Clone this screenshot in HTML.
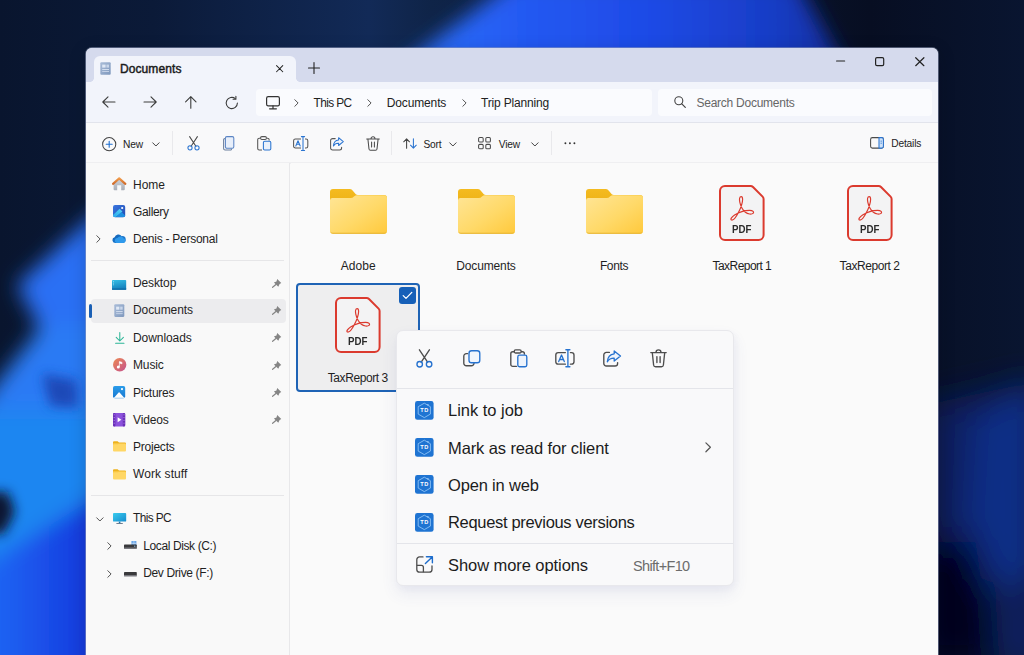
<!DOCTYPE html>
<html lang="en">
<head>
<meta charset="utf-8">
<title>Documents - File Explorer</title>
<style>
*{box-sizing:border-box;margin:0;padding:0}
html,body{width:1024px;height:655px;overflow:hidden}
body{position:relative;background:#0a1733;font-family:"Liberation Sans",sans-serif;color:#1f1f1f;font-size:12px}
svg{position:absolute;overflow:visible;display:block}
.t{position:absolute;white-space:nowrap}
/* wallpaper */
#wall{position:absolute;left:0;top:0;width:1024px;height:655px;overflow:hidden;background:linear-gradient(100deg,#0b1c3c 0%,#0a1936 35%,#081530 70%,#070f24 100%)}
#wall div{position:absolute;border-radius:50%}
/* window */
#win{position:absolute;left:86px;top:48px;width:852px;height:640px;border-radius:6px 6px 0 0;background:#fafafa;overflow:hidden;box-shadow:0 0 0 1px rgba(150,160,190,.5),0 4px 18px rgba(0,0,20,.18)}
#title{position:absolute;left:0;top:0;width:852px;height:34px;background:#d5daed}
#tab{position:absolute;left:8.3px;top:7.5px;width:201.7px;height:26.5px;background:#f2f4fb;border-radius:6px 6px 0 0}
#tab:before,#tab:after{content:"";position:absolute;bottom:0;width:4px;height:4px}
#tab:before{left:-4px;background:radial-gradient(circle at 0 0,rgba(242,244,251,0) 3.6px,#f2f4fb 4.1px)}
#tab:after{right:-4px;background:radial-gradient(circle at 100% 0,rgba(242,244,251,0) 3.6px,#f2f4fb 4.1px)}
#nav{position:absolute;left:0;top:34px;width:852px;height:41px;background:#f2f4fb;border-bottom:1px solid #e2e4ec}
#addr{position:absolute;left:170px;top:40.5px;width:396px;height:27px;background:#fafbfe;border-radius:4px}
#search{position:absolute;left:572px;top:40.5px;width:274px;height:27px;background:#fafbfe;border-radius:4px}
#tool{position:absolute;left:0;top:75px;width:852px;height:41px;background:#f9f9fa;border-bottom:2px solid #efeff1}
.vsep{position:absolute;width:1px;background:#e9e9ec}
#side{position:absolute;left:0;top:115px;width:204px;height:540px;background:#f9f9f9;border-right:1px solid #e8e8ea}
.hsep{position:absolute;left:5px;width:193px;height:1px;background:#e6e6e8}
#selrow{position:absolute;left:5px;top:251px;width:195px;height:24px;background:#ececee;border-radius:4px}
#selbar{position:absolute;left:3px;top:256px;width:2.5px;height:13.5px;background:#1a5fb4;border-radius:2px}
#main{position:absolute;left:205px;top:115px;width:647px;height:540px;background:#fafafa}
#seltile{position:absolute;left:210px;top:235px;width:124px;height:109px;background:#eeeeef;border:2px solid #1e63b5;border-radius:4px}
#check{position:absolute;left:313px;top:238.5px;width:17px;height:17px;background:#1660b8;border-radius:3px}
/* context menu */
#menu{position:absolute;left:396px;top:329.5px;width:338px;height:256.5px;background:#f9f9fa;border:1px solid #e8e8ec;border-radius:7px;box-shadow:0 8px 16px rgba(70,80,150,.09),2px 3px 6px rgba(70,80,150,.04)}
.msep{position:absolute;left:0;width:336px;height:1px;background:#e4e5ea}
</style>
</head>
<body>
<div id="wall">
<svg width="1024" height="655" viewBox="0 0 1024 655" style="left:0;top:0">
  <defs>
    <linearGradient id="wbase" x1="0" y1="0" x2="1" y2="0"><stop offset="0" stop-color="#09152e"/><stop offset="0.15" stop-color="#0b1a38"/><stop offset="0.36" stop-color="#122a57"/><stop offset="0.42" stop-color="#0f2448"/><stop offset="0.85" stop-color="#070e22"/><stop offset="1" stop-color="#091530"/></linearGradient>
    <linearGradient id="wtop" gradientUnits="userSpaceOnUse" x1="420" y1="0" x2="840" y2="0"><stop offset="0" stop-color="#2b6ef8"/><stop offset="0.25" stop-color="#2459f2"/><stop offset="0.55" stop-color="#1e4ae6"/><stop offset="0.85" stop-color="#183cc4"/><stop offset="1" stop-color="#132e9c"/></linearGradient>
    <linearGradient id="wbot" gradientUnits="userSpaceOnUse" x1="0" y1="0" x2="90" y2="0"><stop offset="0" stop-color="#1f63f3"/><stop offset="0.5" stop-color="#1a4ee8"/><stop offset="1" stop-color="#1439dc"/></linearGradient>
    <filter id="b6" x="-30%" y="-30%" width="160%" height="160%"><feGaussianBlur stdDeviation="6"/></filter>
    <filter id="b10" x="-30%" y="-30%" width="160%" height="160%"><feGaussianBlur stdDeviation="10"/></filter>
    <filter id="b16" x="-40%" y="-40%" width="180%" height="180%"><feGaussianBlur stdDeviation="16"/></filter>
  </defs>
  <rect width="1024" height="655" fill="url(#wbase)"/>
  <!-- top bloom -->
  <path d="M395 70 L515 -20 H796 L846 70 Z" fill="url(#wtop)" filter="url(#b10)"/>
  <!-- left petals -->
  <g filter="url(#b10)">
    <path d="M17 285 L110 200 V350 H51 Z" fill="#2a70f4"/>
    <path d="M43 324 H110 V430 H-30 V418 Z" fill="#2a7af4"/>
    <path d="M-30 410 H110 V492 L-30 578 Z" fill="#1f86f1"/>
    <path d="M-30 574 L110 488 V700 H-30 Z" fill="url(#wbot)"/>
  </g>
  <g filter="url(#b6)">
    
    <path d="M42 374 L76 380 L78 408 L50 406 Z" fill="#1c48b8"/>
    <path d="M-20 492 H8 L15 512 L4 534 H-20 Z" fill="#071230"/>
  </g>
  <!-- right glow -->
  <g filter="url(#b16)">
    <path d="M925 405 L1040 380 V600 L930 560 Z" fill="#081f5c"/><path d="M972 420 L1040 380 V570 L1000 600 L966 520 Z" fill="#0b2e86"/>
    <path d="M925 545 L975 540 L992 660 H925 Z" fill="#02051a"/>
    <path d="M995 600 H1040 V670 H1000 Z" fill="#0a2464"/>
  </g>
</svg>
</div>
<div id="win">
  <div id="title"></div>
  <div id="tab"></div>
  <div id="nav"></div>
  <div id="addr"></div>
  <div id="search"></div>
  <div id="tool">
    <div class="vsep" style="left:86px;top:8px;height:24px"></div>
    <div class="vsep" style="left:304.5px;top:8px;height:24px"></div>
    <div class="vsep" style="left:465px;top:8px;height:24px"></div>
  </div>
  <div id="side">
    <div class="hsep" style="top:97px"></div>
    <div class="hsep" style="top:332px"></div>
  </div>
  <div id="selrow"></div><div id="selbar"></div>
  <div id="main"></div>
  <div id="seltile"></div>
  <div id="check"><svg style="left:3px;top:4px" width="11" height="9" viewBox="0 0 11 9"><path d="M1.2 4.6 L4 7.4 L9.8 1.4" fill="none" stroke="#fff" stroke-width="1.3" stroke-linecap="round" stroke-linejoin="round"/></svg></div>
  <div id="ui" style="position:absolute;left:-86px;top:-48px;width:1024px;height:655px">
    <!-- title bar -->
    <svg style="left:100px;top:62px" width="11" height="13" viewBox="0 0 11 13"><defs><linearGradient id="gdoc" x1="0" y1="0" x2="1" y2="1"><stop offset="0" stop-color="#a9bcd8"/><stop offset="1" stop-color="#7f98bd"/></linearGradient></defs><rect x="0.3" y="0.3" width="10.4" height="12.4" rx="1" fill="url(#gdoc)"/><rect x="2.2" y="2.6" width="3.4" height="3" fill="#dfe8f5"/><rect x="6.4" y="2.6" width="2.6" height="3" fill="#c9d6ea"/><rect x="2.2" y="7" width="6.8" height="1" fill="#d3deef"/><rect x="2.2" y="9" width="6.8" height="1" fill="#c3d0e6"/></svg>
    <span class="t" style="left:120px;top:60.5px;font-size:12px;line-height:17px;-webkit-text-stroke:0.45px #1b1b1b;color:#1b1b1b;letter-spacing:0.09px">Documents</span>
    <svg style="left:276.1px;top:64.7px" width="7.3" height="7.3" viewBox="0 0 8 8"><path d="M0.6 0.6 L7.4 7.4 M7.4 0.6 L0.6 7.4" stroke="#222" stroke-width="1.1" stroke-linecap="round"/></svg>
    <svg style="left:307.5px;top:61.5px" width="12" height="12" viewBox="0 0 12 12"><path d="M6 0.5 V11.5 M0.5 6 H11.5" stroke="#222" stroke-width="1.1" stroke-linecap="round"/></svg>
    <svg style="left:836px;top:60px" width="9" height="2" viewBox="0 0 9 2"><path d="M0.6 1 H8.6" stroke="#222" stroke-width="1.2" stroke-linecap="round"/></svg>
    <svg style="left:875px;top:57px" width="10" height="10" viewBox="0 0 10 10"><rect x="0.6" y="0.7" width="8.1" height="7.9" rx="1.4" fill="none" stroke="#222" stroke-width="1.2"/></svg>
    <svg style="left:914.5px;top:56.8px" width="10" height="10" viewBox="0 0 10 10"><path d="M0.7 0.7 L8.9 8.7 M8.9 0.7 L0.7 8.7" stroke="#222" stroke-width="1.2" stroke-linecap="round"/></svg>
    <!-- nav bar -->
    <svg style="left:102px;top:96px" width="14" height="12" viewBox="0 0 14 12"><path d="M0.8 6 H13 M6 0.8 L0.8 6 L6 11.2" fill="none" stroke="#3c3c3c" stroke-width="1.1" stroke-linecap="round" stroke-linejoin="round"/></svg>
    <svg style="left:143px;top:96px" width="14" height="12" viewBox="0 0 14 12"><path d="M1 6 H13.2 M8 0.8 L13.2 6 L8 11.2" fill="none" stroke="#3c3c3c" stroke-width="1.1" stroke-linecap="round" stroke-linejoin="round"/></svg>
    <svg style="left:185px;top:96px" width="12" height="13" viewBox="0 0 12 13"><path d="M5.8 0.7 V12.3 M0.6 5.9 L5.8 0.7 L11 5.9" fill="none" stroke="#3c3c3c" stroke-width="1.1" stroke-linecap="round" stroke-linejoin="round"/></svg>
    <svg style="left:225px;top:95.5px" width="14" height="14" viewBox="0 0 14 14"><path d="M12.4 7 A5.6 5.6 0 1 1 10.3 2.6" fill="none" stroke="#3c3c3c" stroke-width="1.1" stroke-linecap="round"/><path d="M10.9 0.4 V3.2 H8.1" fill="none" stroke="#3c3c3c" stroke-width="1.1" stroke-linecap="round" stroke-linejoin="round"/></svg>
    <svg style="left:266px;top:95.5px" width="14" height="14" viewBox="0 0 14 14"><rect x="0.6" y="0.6" width="12.8" height="9.2" rx="1.6" fill="none" stroke="#333" stroke-width="1.2"/><path d="M7 9.8 V12.6 M3.6 12.8 H10.4" stroke="#333" stroke-width="1.2" stroke-linecap="round"/></svg>
    <svg style="left:294px;top:98.5px" width="5" height="8" viewBox="0 0 5 8"><path d="M0.8 0.7 L4.1 4 L0.8 7.3" fill="none" stroke="#555" stroke-width="1" stroke-linecap="round" stroke-linejoin="round"/></svg>
    <span class="t" style="left:313.5px;top:94.6px;font-size:11.86px;line-height:17px;color:#222;letter-spacing:-0.60px">This PC</span>
    <svg style="left:367px;top:98.5px" width="5" height="8" viewBox="0 0 5 8"><path d="M0.8 0.7 L4.1 4 L0.8 7.3" fill="none" stroke="#555" stroke-width="1" stroke-linecap="round" stroke-linejoin="round"/></svg>
    <span class="t" style="left:386.7px;top:94.6px;font-size:12px;line-height:17px;color:#222;letter-spacing:-0.13px">Documents</span>
    <svg style="left:461.5px;top:98.5px" width="5" height="8" viewBox="0 0 5 8"><path d="M0.8 0.7 L4.1 4 L0.8 7.3" fill="none" stroke="#555" stroke-width="1" stroke-linecap="round" stroke-linejoin="round"/></svg>
    <span class="t" style="left:481px;top:94.6px;font-size:12px;line-height:17px;color:#222;letter-spacing:-0.17px">Trip Planning</span>
    <svg style="left:673.5px;top:95.9px" width="12" height="12" viewBox="0 0 12 12"><circle cx="4.8" cy="4.8" r="4" fill="none" stroke="#444" stroke-width="1.1"/><path d="M7.8 7.8 L11.3 11.3" stroke="#444" stroke-width="1.2" stroke-linecap="round"/></svg>
    <span class="t" style="left:696.5px;top:95px;font-size:12px;line-height:17px;color:#666;letter-spacing:-0.25px">Search Documents</span>
    <!-- toolbar -->
    <svg style="left:102px;top:136.8px" width="14.4" height="14.4" viewBox="0 0 14.4 14.4"><circle cx="7.2" cy="7.2" r="6.6" fill="none" stroke="#444" stroke-width="1.05"/><path d="M7.2 4.2 V10.2 M4.2 7.2 H10.2" stroke="#1f6fd0" stroke-width="1.1" stroke-linecap="round"/></svg>
    <span class="t" style="left:123px;top:137.9px;font-size:10.2px;line-height:14px;color:#222;letter-spacing:-0.13px">New</span>
    <svg style="left:152px;top:141.5px" width="8" height="5" viewBox="0 0 8 5"><path d="M0.7 0.8 L3.9 4 L7.1 0.8" fill="none" stroke="#444" stroke-width="1" stroke-linecap="round" stroke-linejoin="round"/></svg>
    <svg style="left:186.5px;top:136px" width="13" height="14.5" viewBox="0 0 13 14.5"><path d="M2.6 0.6 L8.9 10.2 M10.4 0.6 L4.1 10.2" fill="none" stroke="#4a4a4a" stroke-width="1.05" stroke-linecap="round"/><circle cx="3" cy="11.8" r="2.1" fill="none" stroke="#2a74d0" stroke-width="1.05"/><circle cx="10" cy="11.8" r="2.1" fill="none" stroke="#2a74d0" stroke-width="1.05"/></svg>
    <svg style="left:222.5px;top:136px" width="12" height="14.5" viewBox="0 0 12 14.5"><path d="M2.2 2.6 H1.9 A1.3 1.3 0 0 0 0.6 3.9 V12.4 A1.5 1.5 0 0 0 2.1 13.9 H7.4 A1.3 1.3 0 0 0 8.7 12.6" fill="none" stroke="#6b7f9c" stroke-width="1.05"/><rect x="2.4" y="0.6" width="8.4" height="11.6" rx="1.5" fill="#e8effa" stroke="#5a84c4" stroke-width="1.05"/></svg>
    <svg style="left:257px;top:135.8px" width="15" height="15" viewBox="0 0 15 15"><path d="M3.2 2.2 H2.2 A1.5 1.5 0 0 0 0.7 3.7 V12.4 A1.5 1.5 0 0 0 2.2 13.9 H5" fill="none" stroke="#555" stroke-width="1.05"/><path d="M9.8 2.2 H10.6 A1.5 1.5 0 0 1 12.1 3.7 V4.4" fill="none" stroke="#555" stroke-width="1.05"/><rect x="3.6" y="0.6" width="5.8" height="2.8" rx="1.2" fill="none" stroke="#555" stroke-width="1.05"/><rect x="6.4" y="5.2" width="7.4" height="8.8" rx="1.3" fill="#eaf1fb" stroke="#2a74d0" stroke-width="1.05"/></svg>
    <svg style="left:292.5px;top:135.8px" width="16" height="15" viewBox="0 0 16 15"><path d="M8 3 H2.4 A1.8 1.8 0 0 0 0.6 4.8 V10.2 A1.8 1.8 0 0 0 2.4 12 H8 M12 3 H13 A1.8 1.8 0 0 1 14.8 4.8 V10.2 A1.8 1.8 0 0 1 13 12 H12" fill="none" stroke="#555" stroke-width="1.05"/><path d="M10 0.6 V14.4 M8.4 0.6 H11.6 M8.4 14.4 H11.6" stroke="#2a74d0" stroke-width="1.05" stroke-linecap="round"/><path d="M2.8 10 L5 4.8 L7.2 10 M3.6 8.3 H6.4" fill="none" stroke="#2a74d0" stroke-width="1.05" stroke-linejoin="round" stroke-linecap="round"/></svg>
    <svg style="left:329.5px;top:136.5px" width="14" height="13.5" viewBox="0 0 14 13.5"><path d="M5.2 1.6 H2.6 A2 2 0 0 0 0.6 3.6 V10.9 A2 2 0 0 0 2.6 12.9 H9.6 A2 2 0 0 0 11.6 10.9 V10.2" fill="none" stroke="#555" stroke-width="1.05" stroke-linecap="round"/><path d="M8.6 0.7 L13.3 4.6 L8.6 8.5 V6.3 C6 6.2 4.5 7.2 3.4 9 C3.6 5.6 5.4 3.2 8.6 2.9 Z" fill="#eaf1fb" stroke="#2a74d0" stroke-width="1.05" stroke-linejoin="round"/></svg>
    <svg style="left:365.5px;top:135.8px" width="14" height="15" viewBox="0 0 14 15"><path d="M0.7 2.9 H13.3 M5 2.7 A2 2 0 0 1 9 2.7 M1.9 3 L3 13 A1.5 1.5 0 0 0 4.5 14.3 H9.5 A1.5 1.5 0 0 0 11 13 L12.1 3 M5.6 6 V11 M8.4 6 V11" fill="none" stroke="#4a4a4a" stroke-width="1.05" stroke-linecap="round" stroke-linejoin="round"/></svg>
    <svg style="left:402.5px;top:137.8px" width="14" height="11" viewBox="0 0 14 11"><path d="M3.6 10.3 V0.9 M0.7 3.8 L3.6 0.8 L6.5 3.8" fill="none" stroke="#444" stroke-width="1.05" stroke-linecap="round" stroke-linejoin="round"/><path d="M10.4 0.7 V10.1 M7.5 7.2 L10.4 10.2 L13.3 7.2" fill="none" stroke="#2a74d0" stroke-width="1.05" stroke-linecap="round" stroke-linejoin="round"/></svg>
    <span class="t" style="left:423.5px;top:137.9px;font-size:10.2px;line-height:14px;color:#222;letter-spacing:-0.17px">Sort</span>
    <svg style="left:449.3px;top:141.5px" width="8" height="5" viewBox="0 0 8 5"><path d="M0.7 0.8 L3.9 4 L7.1 0.8" fill="none" stroke="#444" stroke-width="1" stroke-linecap="round" stroke-linejoin="round"/></svg>
    <svg style="left:478px;top:137.4px" width="13" height="12.4" viewBox="0 0 13 12.4"><g fill="none" stroke="#4a4a4a" stroke-width="1.05"><rect x="0.6" y="0.6" width="4.6" height="4.4" rx="1.1"/><rect x="7.8" y="0.6" width="4.6" height="4.4" rx="1.1"/><rect x="0.6" y="7.4" width="4.6" height="4.4" rx="1.1"/><rect x="7.8" y="7.4" width="4.6" height="4.4" rx="1.1"/></g></svg>
    <span class="t" style="left:498.8px;top:137.9px;font-size:10.2px;line-height:14px;color:#222;letter-spacing:-0.23px">View</span>
    <svg style="left:531.2px;top:141.5px" width="8" height="5" viewBox="0 0 8 5"><path d="M0.7 0.8 L3.9 4 L7.1 0.8" fill="none" stroke="#444" stroke-width="1" stroke-linecap="round" stroke-linejoin="round"/></svg>
    <svg style="left:564px;top:142.4px" width="12" height="3" viewBox="0 0 12 3"><circle cx="1.4" cy="1.3" r="0.95" fill="#333"/><circle cx="5.9" cy="1.3" r="0.95" fill="#333"/><circle cx="10.4" cy="1.3" r="0.95" fill="#333"/></svg>
    <svg style="left:870px;top:136.8px" width="14" height="11.9" viewBox="0 0 14 11.5" preserveAspectRatio="none"><rect x="0.6" y="0.6" width="12.8" height="10.2" rx="1.8" fill="none" stroke="#4a4a4a" stroke-width="1.05"/><path d="M9 0.6 H11.6 A1.8 1.8 0 0 1 13.4 2.4 V9 A1.8 1.8 0 0 1 11.6 10.8 H9 Z" fill="#cfe2f8" stroke="#2a74d0" stroke-width="1.05"/><path d="M10.6 4 H11.8 M10.6 6 H11.8" stroke="#2a74d0" stroke-width="0.9"/></svg>
    <span class="t" style="left:891.2px;top:137.1px;font-size:10.2px;line-height:14px;color:#222;letter-spacing:-0.16px">Details</span>
    <!-- sidebar -->
    <svg style="left:112.4px;top:177.4px" width="14.4" height="13.4" viewBox="0 0 14.4 13.4"><defs><linearGradient id="ghr" x1="0" y1="0" x2="0" y2="1"><stop offset="0" stop-color="#f09a4a"/><stop offset="1" stop-color="#cf6a2a"/></linearGradient><linearGradient id="ghb" x1="0" y1="0" x2="0" y2="1"><stop offset="0" stop-color="#d0d4da"/><stop offset="1" stop-color="#a9aeb8"/></linearGradient></defs><path d="M1.6 6.2 L7.2 1.6 L12.8 6.2 V12.2 A1 1 0 0 1 11.8 13.2 H9.2 V8.2 H5.2 V13.2 H2.6 A1 1 0 0 1 1.6 12.2 Z" fill="url(#ghb)"/><path d="M1 6.9 L7.2 1.4 L13.4 6.9" fill="none" stroke="url(#ghr)" stroke-width="2.1" stroke-linecap="round" stroke-linejoin="round"/></svg>
    <span class="t" style="left:133px;top:176.5px;font-size:12px;line-height:17px;letter-spacing:-0.00px">Home</span>
    <svg style="left:113.3px;top:205.3px" width="12.2" height="12.2" viewBox="0 0 12.2 12.2"><defs><linearGradient id="ggal" x1="0" y1="0" x2="1" y2="1"><stop offset="0" stop-color="#3a78e0"/><stop offset="1" stop-color="#2148b0"/></linearGradient><linearGradient id="ggm" x1="0" y1="1" x2="1" y2="0"><stop offset="0" stop-color="#2aa8ea"/><stop offset="1" stop-color="#55d4f6"/></linearGradient><clipPath id="cgal"><rect x="0" y="0" width="12.2" height="12.2" rx="2"/></clipPath></defs><rect x="0" y="0" width="12.2" height="12.2" rx="2" fill="url(#ggal)"/><g clip-path="url(#cgal)"><path d="M0 10 L6.6 3.8 L9.4 6.6 L2.6 12.2 H0 Z" fill="url(#ggm)"/><path d="M2.4 12.2 L8.6 7 L12.2 10.4 V12.2 Z" fill="#1f8fe0"/></g><circle cx="9.2" cy="3" r="1.1" fill="#fff"/></svg>
    <span class="t" style="left:133px;top:203.9px;font-size:12px;line-height:17px;letter-spacing:-0.33px">Gallery</span>
    <svg style="left:96px;top:234.8px" width="5" height="8" viewBox="0 0 5 8"><path d="M0.8 0.7 L4.1 4 L0.8 7.3" fill="none" stroke="#555" stroke-width="1" stroke-linecap="round" stroke-linejoin="round"/></svg>
    <svg style="left:112.4px;top:234.3px" width="14" height="9.2" viewBox="0 0 14 9.2"><defs><linearGradient id="gcl" x1="0" y1="0" x2="1" y2="1"><stop offset="0" stop-color="#0d5cb0"/><stop offset="1" stop-color="#2a8de0"/></linearGradient></defs><path d="M3 9 A2.9 2.9 0 0 1 2.6 3.3 A4 4 0 0 1 9.7 2.2 A3.4 3.4 0 0 1 11 9 Z" fill="url(#gcl)"/><path d="M4.4 9 A2.6 2.6 0 0 1 5.4 4 A3.6 3.6 0 0 1 11.6 4.6 A2.3 2.3 0 0 1 11.6 9 Z" fill="#2f9aec"/></svg>
    <span class="t" style="left:133px;top:231px;font-size:12px;line-height:17px;letter-spacing:-0.26px">Denis - Personal</span>
    <svg style="left:112.2px;top:280px" width="14.2" height="9.8" viewBox="0 0 14.2 9.8"><defs><linearGradient id="gdk" x1="0" y1="0" x2="0.3" y2="1"><stop offset="0" stop-color="#36bfe6"/><stop offset="1" stop-color="#1480bc"/></linearGradient></defs><rect x="0" y="0" width="14.2" height="9.8" rx="0.8" fill="url(#gdk)"/><path d="M1 1.6 H2 M1 3.2 H2 M1 4.8 H2" stroke="#a8e8fa" stroke-width="0.7"/><rect x="0" y="8.4" width="14.2" height="1.4" fill="#0f6ca8"/></svg>
    <span class="t" style="left:133px;top:275.2px;font-size:12px;line-height:17px;letter-spacing:-0.12px">Desktop</span>
    <svg style="left:114.3px;top:304px" width="10.6" height="13.2" viewBox="0 0 11 13" preserveAspectRatio="none"><rect x="0.3" y="0.3" width="10.4" height="12.4" rx="1" fill="url(#gdoc)"/><rect x="2.2" y="2.6" width="3.4" height="3" fill="#dfe8f5"/><rect x="6.4" y="2.6" width="2.6" height="3" fill="#c9d6ea"/><rect x="2.2" y="7" width="6.8" height="1" fill="#d3deef"/><rect x="2.2" y="9" width="6.8" height="1" fill="#c3d0e6"/></svg>
    <span class="t" style="left:133px;top:302.4px;font-size:12px;line-height:17px;letter-spacing:-0.08px">Documents</span>
    <svg style="left:115px;top:331.8px" width="9.6" height="12" viewBox="0 0 9.6 12"><path d="M4.8 0.6 V8.8 M1.2 5.4 L4.8 9 L8.4 5.4 M0.6 11.3 H9" fill="none" stroke="#2bb596" stroke-width="1.05" stroke-linecap="round" stroke-linejoin="round"/></svg>
    <span class="t" style="left:133px;top:330px;font-size:12px;line-height:17px;letter-spacing:-0.07px">Downloads</span>
    <svg style="left:112.5px;top:358.2px" width="13.4" height="13.4" viewBox="0 0 13.4 13.4"><defs><linearGradient id="gmu" x1="0" y1="0" x2="1" y2="1"><stop offset="0" stop-color="#ee8a52"/><stop offset="1" stop-color="#c4528e"/></linearGradient></defs><circle cx="6.7" cy="6.7" r="6.7" fill="url(#gmu)"/><circle cx="5.3" cy="9" r="1.5" fill="#fff"/><path d="M6.4 9 V3.6 L9 4.4 V5.8 L6.4 5" fill="#fff" stroke="#fff" stroke-width="0.7" stroke-linejoin="round"/></svg>
    <span class="t" style="left:133px;top:357.2px;font-size:12px;line-height:17px;letter-spacing:-0.13px">Music</span>
    <svg style="left:113.3px;top:386.3px" width="12.2" height="12.2" viewBox="0 0 12.2 12.2"><defs><clipPath id="cpic"><rect x="0" y="0" width="12.2" height="12.2" rx="1.8"/></clipPath><linearGradient id="gpi" x1="0" y1="0" x2="0" y2="1"><stop offset="0" stop-color="#2b9cea"/><stop offset="1" stop-color="#1878d0"/></linearGradient></defs><rect x="0" y="0" width="12.2" height="12.2" rx="1.8" fill="url(#gpi)"/><g clip-path="url(#cpic)"><path d="M0.6 12.2 L5.6 6.6 Q6.1 6.1 6.6 6.6 L11.6 12.2 Z" fill="#fff"/><path d="M0 11.4 H12.2 V12.2 H0 Z" fill="#bfe0f8"/></g><circle cx="9" cy="3.1" r="1.1" fill="#fff"/></svg>
    <span class="t" style="left:133px;top:384.5px;font-size:12px;line-height:17px;letter-spacing:-0.27px">Pictures</span>
    <svg style="left:113.3px;top:412.8px" width="12.2" height="13.4" viewBox="0 0 12.2 13.4"><rect x="0" y="0" width="12.2" height="13.4" rx="1.6" fill="#8c52dc"/><rect x="0" y="0" width="2.4" height="13.4" rx="1" fill="#6a30b8"/><rect x="9.8" y="0" width="2.4" height="13.4" rx="1" fill="#6a30b8"/><path d="M0.7 1.8 H1.7 M0.7 4.6 H1.7 M0.7 7.4 H1.7 M0.7 10.2 H1.7 M10.5 1.8 H11.5 M10.5 4.6 H11.5 M10.5 7.4 H11.5 M10.5 10.2 H11.5" stroke="#b58af0" stroke-width="1"/><path d="M4.6 4.2 L8.4 6.7 L4.6 9.2 Z" fill="#fff"/></svg>
    <span class="t" style="left:133px;top:411.7px;font-size:12px;line-height:17px;letter-spacing:-0.16px">Videos</span>
    <svg style="left:113.1px;top:441.4px" width="13" height="10.6" viewBox="0 0 13 10.6"><path d="M0 1.2 A1 1 0 0 1 1 0.2 H4.6 L6 1.6 H12 A1 1 0 0 1 13 2.6 V4 H0 Z" fill="#eeb21e"/><rect x="0" y="2.4" width="13" height="8.2" rx="1" fill="#ffd766"/><rect x="0" y="2.4" width="5.2" height="0.9" fill="#f7c640"/></svg>
    <span class="t" style="left:133px;top:439px;font-size:12px;line-height:17px;letter-spacing:-0.23px">Projects</span>
    <svg style="left:113.1px;top:468.7px" width="13" height="10.6" viewBox="0 0 13 10.6"><path d="M0 1.2 A1 1 0 0 1 1 0.2 H4.6 L6 1.6 H12 A1 1 0 0 1 13 2.6 V4 H0 Z" fill="#eeb21e"/><rect x="0" y="2.4" width="13" height="8.2" rx="1" fill="#ffd766"/><rect x="0" y="2.4" width="5.2" height="0.9" fill="#f7c640"/></svg>
    <span class="t" style="left:133px;top:466.2px;font-size:12px;line-height:17px;letter-spacing:0.09px">Work stuff</span>
    <svg style="left:95.5px;top:516.5px" width="8" height="5" viewBox="0 0 8 5"><path d="M0.7 0.8 L3.9 4 L7.1 0.8" fill="none" stroke="#555" stroke-width="1" stroke-linecap="round" stroke-linejoin="round"/></svg>
    <svg style="left:113px;top:513px" width="13.2" height="11" viewBox="0 0 13.2 11"><defs><linearGradient id="gpc" x1="0" y1="0" x2="1" y2="1"><stop offset="0" stop-color="#3accee"/><stop offset="1" stop-color="#168cce"/></linearGradient></defs><rect x="0" y="0" width="13.2" height="8.6" rx="0.9" fill="url(#gpc)"/><path d="M6.6 8.6 V10.2" stroke="#1579b8" stroke-width="1.6"/><path d="M3.8 10.5 H9.4" stroke="#5a6e82" stroke-width="0.9" stroke-linecap="round"/></svg>
    <span class="t" style="left:133px;top:510.1px;font-size:11.86px;line-height:17px;letter-spacing:-0.60px">This PC</span>
    <svg style="left:107px;top:542.3px" width="5" height="8" viewBox="0 0 5 8"><path d="M0.8 0.7 L4.1 4 L0.8 7.3" fill="none" stroke="#555" stroke-width="1" stroke-linecap="round" stroke-linejoin="round"/></svg>
    <svg style="left:123.5px;top:540.8px" width="12.8" height="8.2" viewBox="0 0 12.8 8.2"><rect x="7.4" y="0" width="5" height="4.8" fill="#6aa6e8"/><path d="M7.4 2.4 H12.4 M9.9 0 V4.8" stroke="#cfe4fa" stroke-width="0.6"/><rect x="0" y="3.6" width="12.8" height="3.8" rx="0.7" fill="#3a3a3c"/><rect x="0" y="6.6" width="12.8" height="1.4" rx="0.5" fill="#7a7a80"/><circle cx="10.8" cy="5.2" r="0.6" fill="#9ad0ff"/></svg>
    <span class="t" style="left:143.2px;top:538px;font-size:12px;line-height:17px;letter-spacing:-0.38px">Local Disk (C:)</span>
    <svg style="left:107px;top:569.5px" width="5" height="8" viewBox="0 0 5 8"><path d="M0.8 0.7 L4.1 4 L0.8 7.3" fill="none" stroke="#555" stroke-width="1" stroke-linecap="round" stroke-linejoin="round"/></svg>
    <svg style="left:123.5px;top:571.6px" width="12.8" height="5" viewBox="0 0 12.8 5"><rect x="0" y="0" width="12.8" height="3.8" rx="0.7" fill="#3a3a3c"/><rect x="0" y="3" width="12.8" height="1.6" rx="0.5" fill="#7a7a80"/></svg>
    <span class="t" style="left:143.2px;top:565.2px;font-size:12px;line-height:17px;letter-spacing:-0.36px">Dev Drive (F:)</span>
    <svg style="left:271.8px;top:278.6px" width="9.4" height="8.8" viewBox="0 0 9.4 8.8"><path d="M5.2 0.1 L9.3 3.9 L7.6 4.9 L6.3 7.8 L1.9 3.6 L4.5 2.4 Z" fill="#858585"/><path d="M3.9 5.5 L0.6 8.3" stroke="#858585" stroke-width="1.2" stroke-linecap="round"/></svg>
    <svg style="left:271.8px;top:305.8px" width="9.4" height="8.8" viewBox="0 0 9.4 8.8"><path d="M5.2 0.1 L9.3 3.9 L7.6 4.9 L6.3 7.8 L1.9 3.6 L4.5 2.4 Z" fill="#858585"/><path d="M3.9 5.5 L0.6 8.3" stroke="#858585" stroke-width="1.2" stroke-linecap="round"/></svg>
    <svg style="left:271.8px;top:333.4px" width="9.4" height="8.8" viewBox="0 0 9.4 8.8"><path d="M5.2 0.1 L9.3 3.9 L7.6 4.9 L6.3 7.8 L1.9 3.6 L4.5 2.4 Z" fill="#858585"/><path d="M3.9 5.5 L0.6 8.3" stroke="#858585" stroke-width="1.2" stroke-linecap="round"/></svg>
    <svg style="left:271.8px;top:360.6px" width="9.4" height="8.8" viewBox="0 0 9.4 8.8"><path d="M5.2 0.1 L9.3 3.9 L7.6 4.9 L6.3 7.8 L1.9 3.6 L4.5 2.4 Z" fill="#858585"/><path d="M3.9 5.5 L0.6 8.3" stroke="#858585" stroke-width="1.2" stroke-linecap="round"/></svg>
    <svg style="left:271.8px;top:387.9px" width="9.4" height="8.8" viewBox="0 0 9.4 8.8"><path d="M5.2 0.1 L9.3 3.9 L7.6 4.9 L6.3 7.8 L1.9 3.6 L4.5 2.4 Z" fill="#858585"/><path d="M3.9 5.5 L0.6 8.3" stroke="#858585" stroke-width="1.2" stroke-linecap="round"/></svg>
    <svg style="left:271.8px;top:415.1px" width="9.4" height="8.8" viewBox="0 0 9.4 8.8"><path d="M5.2 0.1 L9.3 3.9 L7.6 4.9 L6.3 7.8 L1.9 3.6 L4.5 2.4 Z" fill="#858585"/><path d="M3.9 5.5 L0.6 8.3" stroke="#858585" stroke-width="1.2" stroke-linecap="round"/></svg>
    <!-- files -->
    <svg width="0" height="0" style="left:0;top:0"><defs><linearGradient id="gfb" x1="0" y1="0" x2="1" y2="1"><stop offset="0" stop-color="#ffe596"/><stop offset="0.55" stop-color="#ffd968"/><stop offset="1" stop-color="#ffc93c"/></linearGradient><linearGradient id="gft" x1="0" y1="0" x2="0" y2="1"><stop offset="0" stop-color="#f4bb20"/><stop offset="1" stop-color="#eaae14"/></linearGradient></defs></svg>
    <svg style="left:329.8px;top:189.3px" width="57" height="44.8" viewBox="0 0 57 44.8"><path d="M0 3 A3 3 0 0 1 3 0 H19.5 Q21.4 0 22.6 1.4 L25.8 5.2 Q26.6 6 27.8 6 H54 A3 3 0 0 1 57 9 V20 H0 Z" fill="url(#gft)"/><path d="M0 11.5 A2.4 2.4 0 0 1 2.4 9.1 H20.6 Q22.6 9.1 24 7.6 L24.6 6.9 Q25.4 6.2 26.6 6.2 H54.4 A2.6 2.6 0 0 1 57 8.8 V42 A2.8 2.8 0 0 1 54.2 44.8 H2.8 A2.8 2.8 0 0 1 0 42 Z" fill="url(#gfb)"/><path d="M0.3 42.6 A2.6 2.6 0 0 0 2.8 44.8 H54.2 A2.6 2.6 0 0 0 56.7 42.6 A2.8 2.8 0 0 1 54.2 43.8 H2.8 A2.8 2.8 0 0 1 0.3 42.6 Z" fill="#e6b32e"/></svg>
    <span class="t" style="left:340.8px;top:257.9px;font-size:12px;line-height:17px;letter-spacing:0.06px">Adobe</span>
    <svg style="left:457.5px;top:189.3px" width="57" height="44.8" viewBox="0 0 57 44.8"><path d="M0 3 A3 3 0 0 1 3 0 H19.5 Q21.4 0 22.6 1.4 L25.8 5.2 Q26.6 6 27.8 6 H54 A3 3 0 0 1 57 9 V20 H0 Z" fill="url(#gft)"/><path d="M0 11.5 A2.4 2.4 0 0 1 2.4 9.1 H20.6 Q22.6 9.1 24 7.6 L24.6 6.9 Q25.4 6.2 26.6 6.2 H54.4 A2.6 2.6 0 0 1 57 8.8 V42 A2.8 2.8 0 0 1 54.2 44.8 H2.8 A2.8 2.8 0 0 1 0 42 Z" fill="url(#gfb)"/><path d="M0.3 42.6 A2.6 2.6 0 0 0 2.8 44.8 H54.2 A2.6 2.6 0 0 0 56.7 42.6 A2.8 2.8 0 0 1 54.2 43.8 H2.8 A2.8 2.8 0 0 1 0.3 42.6 Z" fill="#e6b32e"/></svg>
    <span class="t" style="left:456.2px;top:257.9px;font-size:12px;line-height:17px;letter-spacing:-0.13px">Documents</span>
    <svg style="left:585.5px;top:189.3px" width="57" height="44.8" viewBox="0 0 57 44.8"><path d="M0 3 A3 3 0 0 1 3 0 H19.5 Q21.4 0 22.6 1.4 L25.8 5.2 Q26.6 6 27.8 6 H54 A3 3 0 0 1 57 9 V20 H0 Z" fill="url(#gft)"/><path d="M0 11.5 A2.4 2.4 0 0 1 2.4 9.1 H20.6 Q22.6 9.1 24 7.6 L24.6 6.9 Q25.4 6.2 26.6 6.2 H54.4 A2.6 2.6 0 0 1 57 8.8 V42 A2.8 2.8 0 0 1 54.2 44.8 H2.8 A2.8 2.8 0 0 1 0 42 Z" fill="url(#gfb)"/><path d="M0.3 42.6 A2.6 2.6 0 0 0 2.8 44.8 H54.2 A2.6 2.6 0 0 0 56.7 42.6 A2.8 2.8 0 0 1 54.2 43.8 H2.8 A2.8 2.8 0 0 1 0.3 42.6 Z" fill="#e6b32e"/></svg>
    <span class="t" style="left:599.9px;top:257.9px;font-size:12px;line-height:17px;letter-spacing:-0.36px">Fonts</span>
    <svg style="left:719.1px;top:184.7px" width="45.6" height="56" viewBox="0 0 45.6 56"><path d="M6 1 H31.6 Q33 1 34 2 L43.6 11.6 Q44.6 12.6 44.6 14 V50 A5 5 0 0 1 39.6 55 H6 A5 5 0 0 1 1 50 V6 A5 5 0 0 1 6 1 Z" fill="#f3f3f4" stroke="#db3a2e" stroke-width="2" stroke-linejoin="round"/><path d="M22.2 11.6 C20.4 11.6 20.2 14.2 20.8 17 C21.6 21 23.4 24.6 26.4 27.2 C28.8 29.2 32.6 29.6 34 28.4 C35.4 27.2 34 25.4 30.6 25.4 C26 25.4 19.6 27.4 15.6 30 C12.4 32.2 11 34.6 12.6 35 C14.4 35.4 17.2 32 19.4 27.6 C21.6 23.2 23.6 17.6 23.6 14.4 C23.6 12.6 23.2 11.6 22.2 11.6 Z" fill="none" stroke="#db3a2e" stroke-width="1.2" stroke-linejoin="round"/></svg>
    <span class="t" style="left:732.3px;top:221.8px;font-size:11px;line-height:15px;font-weight:700;display:inline-block;transform-origin:0 50%;color:#2a2a2a;transform:scaleX(0.882)">PDF</span>
    <span class="t" style="left:712.5px;top:257.9px;font-size:12px;line-height:17px;letter-spacing:-0.55px">TaxReport 1</span>
    <svg style="left:846.8px;top:184.7px" width="45.6" height="56" viewBox="0 0 45.6 56"><path d="M6 1 H31.6 Q33 1 34 2 L43.6 11.6 Q44.6 12.6 44.6 14 V50 A5 5 0 0 1 39.6 55 H6 A5 5 0 0 1 1 50 V6 A5 5 0 0 1 6 1 Z" fill="#f3f3f4" stroke="#db3a2e" stroke-width="2" stroke-linejoin="round"/><path d="M22.2 11.6 C20.4 11.6 20.2 14.2 20.8 17 C21.6 21 23.4 24.6 26.4 27.2 C28.8 29.2 32.6 29.6 34 28.4 C35.4 27.2 34 25.4 30.6 25.4 C26 25.4 19.6 27.4 15.6 30 C12.4 32.2 11 34.6 12.6 35 C14.4 35.4 17.2 32 19.4 27.6 C21.6 23.2 23.6 17.6 23.6 14.4 C23.6 12.6 23.2 11.6 22.2 11.6 Z" fill="none" stroke="#db3a2e" stroke-width="1.2" stroke-linejoin="round"/></svg>
    <span class="t" style="left:860px;top:221.8px;font-size:11px;line-height:15px;font-weight:700;display:inline-block;transform-origin:0 50%;color:#2a2a2a;transform:scaleX(0.882)">PDF</span>
    <span class="t" style="left:839.6px;top:257.9px;font-size:12px;line-height:17px;letter-spacing:-0.43px">TaxReport 2</span>
    <svg style="left:335.0px;top:297.3px" width="45.6" height="56" viewBox="0 0 45.6 56"><path d="M6 1 H31.6 Q33 1 34 2 L43.6 11.6 Q44.6 12.6 44.6 14 V50 A5 5 0 0 1 39.6 55 H6 A5 5 0 0 1 1 50 V6 A5 5 0 0 1 6 1 Z" fill="#f3f3f4" stroke="#db3a2e" stroke-width="2" stroke-linejoin="round"/><path d="M22.2 11.6 C20.4 11.6 20.2 14.2 20.8 17 C21.6 21 23.4 24.6 26.4 27.2 C28.8 29.2 32.6 29.6 34 28.4 C35.4 27.2 34 25.4 30.6 25.4 C26 25.4 19.6 27.4 15.6 30 C12.4 32.2 11 34.6 12.6 35 C14.4 35.4 17.2 32 19.4 27.6 C21.6 23.2 23.6 17.6 23.6 14.4 C23.6 12.6 23.2 11.6 22.2 11.6 Z" fill="none" stroke="#db3a2e" stroke-width="1.2" stroke-linejoin="round"/></svg>
    <span class="t" style="left:348.2px;top:334.4px;font-size:11px;line-height:15px;font-weight:700;display:inline-block;transform-origin:0 50%;color:#2a2a2a;transform:scaleX(0.882)">PDF</span>
    <span class="t" style="left:327.8px;top:370.4px;font-size:12px;line-height:17px;letter-spacing:-0.43px">TaxReport 3</span>
  </div>
</div>
<div id="menu">
  <div class="msep" style="top:57.5px"></div>
  <div class="msep" style="top:212.5px"></div>
  <div id="mui" style="position:absolute;left:-397px;top:-330.5px;width:1024px;height:655px">
    <svg style="left:415.8px;top:349px" width="16.8" height="19" viewBox="0 0 16.8 19"><path d="M3.4 0.8 L11.6 13.2 M13.4 0.8 L5.2 13.2" fill="none" stroke="#4d4d4d" stroke-width="1.35" stroke-linecap="round"/><circle cx="3.7" cy="15.3" r="2.75" fill="none" stroke="#2672cf" stroke-width="1.35"/><circle cx="13.1" cy="15.3" r="2.75" fill="none" stroke="#2672cf" stroke-width="1.35"/></svg>
    <svg style="left:462.6px;top:350.4px" width="17.6" height="16.6" viewBox="0 0 17.6 16.6"><path d="M4.6 3.6 H3.4 A2.6 2.6 0 0 0 0.8 6.2 V13.2 A2.6 2.6 0 0 0 3.4 15.8 H8.4 A2.6 2.6 0 0 0 11 13.2" fill="none" stroke="#4d4d4d" stroke-width="1.35" stroke-linecap="round"/><rect x="6" y="0.8" width="10.8" height="12" rx="2.6" fill="#f1f6fd" stroke="#2672cf" stroke-width="1.35"/></svg>
    <svg style="left:509.5px;top:349.4px" width="17.6" height="18.6" viewBox="0 0 17.6 18.6"><path d="M4 2.8 H2.8 A2 2 0 0 0 0.8 4.8 V15.4 A2 2 0 0 0 2.8 17.4 H6.4 M11.4 2.8 H12.4 A2 2 0 0 1 14.4 4.8 V5.2" fill="none" stroke="#4d4d4d" stroke-width="1.35" stroke-linecap="round"/><rect x="4.2" y="0.8" width="7" height="3.2" rx="1.5" fill="none" stroke="#4d4d4d" stroke-width="1.3"/><rect x="7.8" y="6.2" width="9" height="11.6" rx="1.7" fill="#eef4fc" stroke="#2672cf" stroke-width="1.35"/></svg>
    <svg style="left:555px;top:349.4px" width="20" height="18.6" viewBox="0 0 20 18.6"><path d="M10.4 3.6 H3.2 A2.4 2.4 0 0 0 0.8 6 V12.8 A2.4 2.4 0 0 0 3.2 15.2 H10.4 M15.4 3.6 H16.6 A2.4 2.4 0 0 1 19 6 V12.8 A2.4 2.4 0 0 1 16.6 15.2 H15.4" fill="none" stroke="#4d4d4d" stroke-width="1.35" stroke-linecap="round"/><path d="M12.9 0.8 V17.8 M10.9 0.8 H14.9 M10.9 17.8 H14.9" stroke="#2672cf" stroke-width="1.35" stroke-linecap="round"/><path d="M3.7 12.6 L6.5 6 L9.3 12.6 M4.7 10.5 H8.3" fill="none" stroke="#2672cf" stroke-width="1.3" stroke-linejoin="round" stroke-linecap="round"/></svg>
    <svg style="left:603px;top:350.3px" width="18.4" height="16.8" viewBox="0 0 18.4 16.8"><path d="M6.4 2.4 H3.4 A2.6 2.6 0 0 0 0.8 5 V13.4 A2.6 2.6 0 0 0 3.4 16 H12 A2.6 2.6 0 0 0 14.6 13.4 V12.6" fill="none" stroke="#4d4d4d" stroke-width="1.35" stroke-linecap="round"/><path d="M11.2 0.9 L17.5 6 L11.2 11.1 V8.2 C7.8 8.1 5.8 9.4 4.3 11.8 C4.6 7.4 7 4.2 11.2 3.8 Z" fill="#eef4fc" stroke="#2672cf" stroke-width="1.3" stroke-linejoin="round"/></svg>
    <svg style="left:650.2px;top:349.4px" width="17" height="18.6" viewBox="0 0 17 18.6"><path d="M0.8 3.6 H16.2 M6 3.4 A2.5 2.5 0 0 1 11 3.4 M2.3 3.8 L3.6 16 A2 2 0 0 0 5.6 17.8 H11.4 A2 2 0 0 0 13.4 16 L14.7 3.8 M6.9 7.6 V13.6 M10.1 7.6 V13.6" fill="none" stroke="#4d4d4d" stroke-width="1.35" stroke-linecap="round" stroke-linejoin="round"/></svg>
    <svg style="left:415.1px;top:400.8px" width="18.6" height="18.8" viewBox="0 0 18.6 18.8"><rect x="0" y="0" width="18.6" height="18.8" rx="2.4" fill="#1f74d2"/><path d="M9.3 2.2 L15.4 5.7 V13.1 L9.3 16.6 L3.2 13.1 V5.7 Z" fill="none" stroke="#8cc2f5" stroke-width="0.9" stroke-linejoin="round"/><circle cx="12.9" cy="3.8" r="0.8" fill="#9ccbf7"/><text x="9.7" y="11.5" font-family="Liberation Sans, sans-serif" font-weight="700" font-size="5.6" fill="#fff" text-anchor="middle" letter-spacing="0.7">TD</text></svg>
    <span class="t" style="left:448px;top:399.4px;font-size:16.5px;line-height:23px;color:#1c1c1c;letter-spacing:-0.02px">Link to job</span>
    <svg style="left:415.1px;top:438.1px" width="18.6" height="18.8" viewBox="0 0 18.6 18.8"><rect x="0" y="0" width="18.6" height="18.8" rx="2.4" fill="#1f74d2"/><path d="M9.3 2.2 L15.4 5.7 V13.1 L9.3 16.6 L3.2 13.1 V5.7 Z" fill="none" stroke="#8cc2f5" stroke-width="0.9" stroke-linejoin="round"/><circle cx="12.9" cy="3.8" r="0.8" fill="#9ccbf7"/><text x="9.7" y="11.5" font-family="Liberation Sans, sans-serif" font-weight="700" font-size="5.6" fill="#fff" text-anchor="middle" letter-spacing="0.7">TD</text></svg>
    <span class="t" style="left:448px;top:436.7px;font-size:16.5px;line-height:23px;color:#1c1c1c;letter-spacing:-0.11px">Mark as read for client</span>
    <svg style="left:415.1px;top:475.4px" width="18.6" height="18.8" viewBox="0 0 18.6 18.8"><rect x="0" y="0" width="18.6" height="18.8" rx="2.4" fill="#1f74d2"/><path d="M9.3 2.2 L15.4 5.7 V13.1 L9.3 16.6 L3.2 13.1 V5.7 Z" fill="none" stroke="#8cc2f5" stroke-width="0.9" stroke-linejoin="round"/><circle cx="12.9" cy="3.8" r="0.8" fill="#9ccbf7"/><text x="9.7" y="11.5" font-family="Liberation Sans, sans-serif" font-weight="700" font-size="5.6" fill="#fff" text-anchor="middle" letter-spacing="0.7">TD</text></svg>
    <span class="t" style="left:448px;top:474px;font-size:16.5px;line-height:23px;color:#1c1c1c;letter-spacing:-0.18px">Open in web</span>
    <svg style="left:415.1px;top:512.6px" width="18.6" height="18.8" viewBox="0 0 18.6 18.8"><rect x="0" y="0" width="18.6" height="18.8" rx="2.4" fill="#1f74d2"/><path d="M9.3 2.2 L15.4 5.7 V13.1 L9.3 16.6 L3.2 13.1 V5.7 Z" fill="none" stroke="#8cc2f5" stroke-width="0.9" stroke-linejoin="round"/><circle cx="12.9" cy="3.8" r="0.8" fill="#9ccbf7"/><text x="9.7" y="11.5" font-family="Liberation Sans, sans-serif" font-weight="700" font-size="5.6" fill="#fff" text-anchor="middle" letter-spacing="0.7">TD</text></svg>
    <span class="t" style="left:448px;top:511.2px;font-size:16.5px;line-height:23px;color:#1c1c1c;letter-spacing:-0.32px">Request previous versions</span>
    <svg style="left:704.5px;top:442.3px" width="6.4" height="10.6" viewBox="0 0 6.4 10.6"><path d="M0.9 0.8 L5.4 5.3 L0.9 9.8" fill="none" stroke="#555" stroke-width="1.2" stroke-linecap="round" stroke-linejoin="round"/></svg>
    <svg style="left:415.8px;top:556px" width="17.4" height="17" viewBox="0 0 17.4 17"><path d="M7 0.9 H3.6 A2.8 2.8 0 0 0 0.8 3.7 V13.4 A2.8 2.8 0 0 0 3.6 16.2 H13.2 A2.8 2.8 0 0 0 16 13.4 V10" fill="none" stroke="#4d4d4d" stroke-width="1.3" stroke-linecap="round"/><path d="M0.8 9.4 H5.4 A2 2 0 0 1 7.4 11.4 V16.2" fill="none" stroke="#4d4d4d" stroke-width="1.3"/><path d="M9.4 7.6 L16.2 0.9 M10.4 0.8 H16.4 V6.8" fill="none" stroke="#1c6ccc" stroke-width="1.4" stroke-linecap="round" stroke-linejoin="round"/></svg>
    <span class="t" style="left:448px;top:554.2px;font-size:16.5px;line-height:23px;color:#1c1c1c;letter-spacing:-0.07px">Show more options</span>
    <span class="t" style="left:633px;top:556.3px;font-size:14.5px;line-height:20px;color:#6c6c6c;letter-spacing:-0.66px">Shift+F10</span>
  </div>
</div>
</body>
</html>
